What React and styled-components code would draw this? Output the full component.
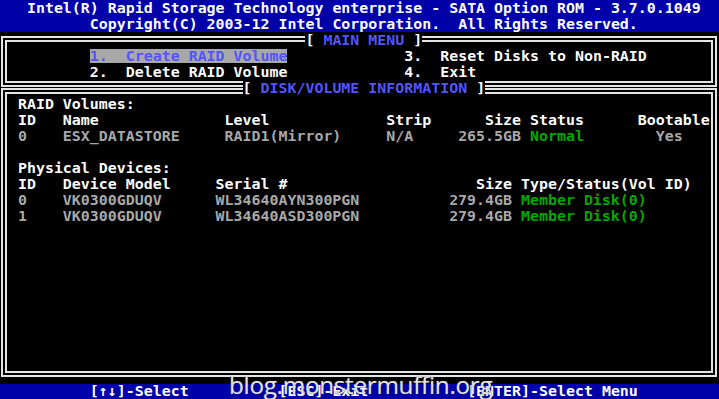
import React from 'react';
import styled, { createGlobalStyle } from 'styled-components';

const BLUE = '#0000a8';
const WHITE = '#fcfcfc';
const GRAY = '#a8a8a8';
const LBLUE = '#5454fc';
const GREEN = '#00a800';

const tones = { white: WHITE, gray: GRAY, green: GREEN, blue: LBLUE };

const GlobalStyle = createGlobalStyle`
  html, body { margin: 0; padding: 0; background: #000; }
  body { width: 719px; height: 399px; overflow: hidden; }
`;

const Screen = styled.div`
  position: relative;
  width: 719px;
  height: 399px;
  overflow: hidden;
  background: #000;
  color: ${GRAY};
  font-family: "DejaVu Sans Mono", "Liberation Mono", monospace;
  font-weight: bold;
  font-size: 14.93px;
  line-height: 16px;
  white-space: pre;
  display: flex;
  flex-direction: column;
`;

const TitleBar = styled.header`
  background: ${BLUE};
  color: ${WHITE};
  height: 32px;
  display: flex;
  flex-direction: column;
`;

const Line = styled.div`
  height: 16px;
  padding-left: ${(p) => p.$col}ch;
  color: ${(p) => tones[p.$tone || 'white']};
`;

const Box = styled.section`
  position: relative;
  margin: ${(p) => p.$mt}px 2px ${(p) => p.$mb}px 1px;
  border: 6px double #e4e4e4;
  padding: ${(p) => p.$pt}px 0 ${(p) => p.$pb}px calc(${(p) => p.$col}ch - 7px);
  flex: ${(p) => (p.$grow ? '1 1 auto' : '0 0 auto')};
`;

const BoxTitle = styled.div`
  position: absolute;
  top: ${(p) => p.$top}px;
  left: calc(${(p) => p.$col}ch - 7px);
  background: #000;
  color: ${WHITE};
  height: 16px;
`;

const Label = styled.span`
  color: ${LBLUE};
`;

const MenuGrid = styled.div`
  display: grid;
  grid-template-columns: 35ch auto;
  grid-auto-rows: 16px;
`;

const MenuItem = styled.div`
  justify-self: start;
  align-self: center;
  height: 14px;
  line-height: 14px;
  color: ${(p) => (p.$active ? LBLUE : WHITE)};
  background: ${(p) => (p.$active ? GRAY : 'transparent')};
`;

const Table = styled.div`
  display: grid;
  grid-template-columns: ${(p) => p.$cols};
  grid-auto-rows: 16px;
  margin-bottom: ${(p) => p.$gap || 0}px;
`;

const Heading = styled.div`
  grid-column: 1 / -1;
  color: ${WHITE};
`;

const Cell = styled.span`
  color: ${(p) => tones[p.$tone || 'gray']};
  text-align: ${(p) => (p.$right ? 'right' : 'left')};
  padding-left: ${(p) => p.$indent || 0}ch;
  padding-right: ${(p) => (p.$right ? 1 : 0)}ch;
`;

const Footer = styled.footer`
  background: ${BLUE};
  color: ${WHITE};
  height: 15px;
  display: grid;
  grid-template-columns: 21ch 21ch auto;
  padding-left: 10ch;
  line-height: 15px;
  overflow: hidden;
`;

const Watermark = styled.div`
  position: absolute;
  left: 229px;
  top: 372px;
  font-family: "Open Sans", "Noto Sans", sans-serif;
  font-weight: 400;
  font-size: 24.3px;
  line-height: 26px;
  letter-spacing: -0.3px;
  color: #e2e2e2;
  text-shadow: 0 0 1px #555;
  white-space: nowrap;
`;

const raidCols = '5ch 18ch 18ch 8ch 8ch 12ch 8ch';
const physCols = '5ch 17ch 26ch 8ch auto';

export default function App() {
  return (
    <>
      <GlobalStyle />
      <Screen>
        <TitleBar>
          <Line $col={3}>Intel(R) Rapid Storage Technology enterprise - SATA Option ROM - 3.7.0.1049</Line>
          <Line $col={10}>Copyright(C) 2003-12 Intel Corporation.  All Rights Reserved.</Line>
        </TitleBar>

        <Box $mt={4} $mb={1} $pt={6} $pb={1} $col={10}>
          <BoxTitle $top={-10} $col={34}>[ <Label>MAIN MENU</Label> ]</BoxTitle>
          <MenuGrid>
            <MenuItem $active>1.  Create RAID Volume</MenuItem>
            <MenuItem>3.  Reset Disks to Non-RAID</MenuItem>
            <MenuItem>2.  Delete RAID Volume</MenuItem>
            <MenuItem>4.  Exit</MenuItem>
          </MenuGrid>
        </Box>

        <Box $grow $mt={0} $mb={7} $pt={2} $pb={0} $col={2}>
          <BoxTitle $top={-14} $col={27}>[ <Label>DISK/VOLUME INFORMATION</Label> ]</BoxTitle>
          <Table $cols={raidCols} $gap={16}>
            <Heading>RAID Volumes:</Heading>
            <Cell $tone="white">ID</Cell>
            <Cell $tone="white">Name</Cell>
            <Cell $tone="white">Level</Cell>
            <Cell $tone="white">Strip</Cell>
            <Cell $tone="white" $right>Size</Cell>
            <Cell $tone="white">Status</Cell>
            <Cell $tone="white">Bootable</Cell>
            <Cell>0</Cell>
            <Cell>ESX_DATASTORE</Cell>
            <Cell>RAID1(Mirror)</Cell>
            <Cell>N/A</Cell>
            <Cell $right>265.5GB</Cell>
            <Cell $tone="green">Normal</Cell>
            <Cell $indent={2}>Yes</Cell>
          </Table>
          <Table $cols={physCols}>
            <Heading>Physical Devices:</Heading>
            <Cell $tone="white">ID</Cell>
            <Cell $tone="white">Device Model</Cell>
            <Cell $tone="white">Serial #</Cell>
            <Cell $tone="white" $right>Size</Cell>
            <Cell $tone="white">Type/Status(Vol ID)</Cell>
            <Cell>0</Cell>
            <Cell>VK0300GDUQV</Cell>
            <Cell>WL34640AYN300PGN</Cell>
            <Cell $right>279.4GB</Cell>
            <Cell $tone="green">Member Disk(0)</Cell>
            <Cell>1</Cell>
            <Cell>VK0300GDUQV</Cell>
            <Cell>WL34640ASD300PGN</Cell>
            <Cell $right>279.4GB</Cell>
            <Cell $tone="green">Member Disk(0)</Cell>
          </Table>
        </Box>

        <Footer>
          <span>[↑↓]-Select</span>
          <span>[ESC]-Exit</span>
          <span>[ENTER]-Select Menu</span>
        </Footer>

        <Watermark>blog.monstermuffin.org</Watermark>
      </Screen>
    </>
  );
}
